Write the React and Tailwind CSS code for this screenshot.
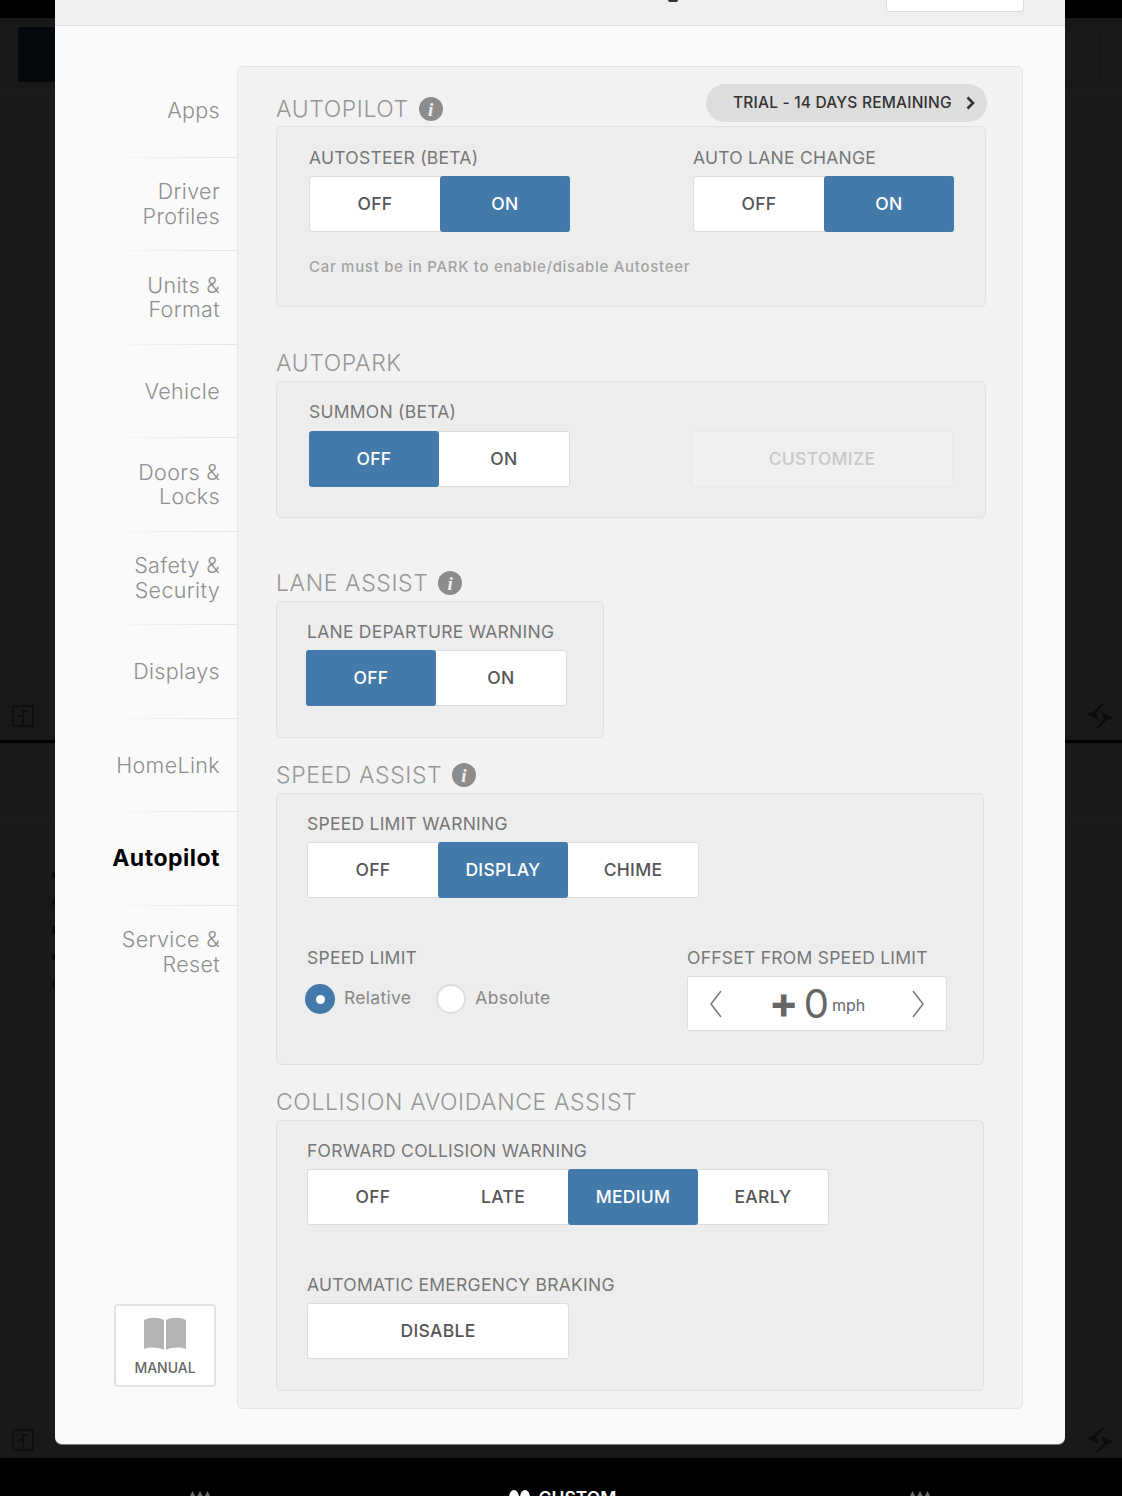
const navItems = [
  ["Apps"],
  ["Driver", "Profiles"],
  ["Units &", "Format"],
  ["Vehicle"],
  ["Doors &", "Locks"],
  ["Safety &", "Security"],
  ["Displays"],
  ["HomeLink"],
  ["Autopilot"],
  ["Service &", "Reset"],
];

function InfoIcon() {
  return (
    <span className="flex h-[24px] w-[24px] items-center justify-center rounded-full bg-[#8c8c8c] font-['Liberation_Serif',serif] text-[19px] font-bold italic leading-none text-[#f2f2f2]">
      i
    </span>
  );
}

function Segments({ options, active }) {
  return (
    <div className="flex h-[56px] w-fit rounded-[3px] border border-[#dcdcdc] bg-white">
      {options.map((o) => (
        <div
          key={o}
          className={
            o === active
              ? "-my-px flex w-[130px] items-center justify-center rounded-[3px] bg-[#447aaa] pt-px text-[17.5px] font-medium tracking-[0.3px] text-white first:-ml-px last:-mr-px"
              : "flex w-[130px] items-center justify-center pt-px text-[17.5px] font-medium tracking-[0.3px] text-[#555]"
          }
        >
          {o}
        </div>
      ))}
    </div>
  );
}

function Label({ children }) {
  return <div className="h-[20px] text-[17.5px] leading-[20px] tracking-[0.25px] whitespace-nowrap text-[#777]">{children}</div>;
}

function Heading({ children, info }) {
  return (
    <div className="flex h-[24px] items-center gap-[10px] text-[23px] font-light leading-[24px] tracking-[0.6px] whitespace-nowrap text-[#979797]">
      {children}
      {info && <InfoIcon />}
    </div>
  );
}

function Radio({ checked, label }) {
  return (
    <div className="flex items-center gap-[9px]">
      {checked ? (
        <span className="flex h-[30px] w-[30px] items-center justify-center rounded-full bg-[#447aaa]">
          <span className="h-[9px] w-[9px] rounded-full bg-white" />
        </span>
      ) : (
        <span className="h-[30px] w-[30px] rounded-full border-2 border-[#dedede] bg-white" />
      )}
      <span className="-mt-[2px] text-[17.5px] tracking-[0.3px] text-[#888]">{label}</span>
    </div>
  );
}

function BookIcon() {
  return (
    <svg width="44" height="34" viewBox="0 0 44 34" fill="#b3b3b3">
      <path d="M1 3 C7 0 15 0 21 3 V33 C15 30 7 30 1 32 Z" />
      <path d="M23 3 C29 0 37 0 43 3 V32 C37 30 29 30 23 33 Z" />
    </svg>
  );
}

function TripleArrow() {
  return (
    <svg width="22" height="10" viewBox="0 0 22 10" fill="#6e6e6e">
      <path d="M0 10 L3.5 3 L7 10 Z" />
      <path d="M7.5 10 L11 3 L14.5 10 Z" />
      <path d="M15 10 L18.5 3 L22 10 Z" />
    </svg>
  );
}

function CornerIcon() {
  return (
    <svg width="22" height="22" viewBox="0 0 22 22" fill="none" stroke="#0c0c0c" strokeWidth="1.5">
      <rect x="1" y="1" width="20" height="20" rx="1" />
      <path d="M6 11 H11 V21 M11 11 V6 H16" />
    </svg>
  );
}

function SyncIcon() {
  return (
    <svg width="24" height="28" viewBox="0 0 24 28" fill="none" stroke="#0c0c0c" strokeWidth="1.8">
      <path d="M15 2 L6 11 L9 17" />
      <path d="M9 26 L18 17 L15 11" />
      <path d="M1 12 L7 11 L9 16 Z" fill="#0c0c0c" />
      <path d="M23 16 L17 17 L15 12 Z" fill="#0c0c0c" />
    </svg>
  );
}

export default function App() {
  return (
    <div className="relative flex h-[1496px] w-[1122px] flex-col overflow-hidden bg-black font-['Inter',sans-serif]">
      {/* dimmed screen behind the dialog */}
      <div className="mt-[18px] flex h-[722px] flex-col justify-between bg-[#191919]">
        <div className="flex h-[75px] justify-between border-b border-[#1e1e1e] pt-[9px] pr-[22px] pl-[18px]">
          <div className="h-[55px] w-[50px] rounded-[3px] bg-[#05090e]" />
          <div className="h-[55px] w-[50px] rounded-[3px] border border-[#151515]" />
        </div>
        <div className="flex items-center justify-between pr-[10px] pb-[10px] pl-[12px]">
          <CornerIcon />
          <SyncIcon />
        </div>
      </div>
      <div className="relative mt-[3px] flex h-[715px] flex-col justify-between bg-[#191919]">
        <div className="mt-[76px] border-b border-[#1e1e1e]" />
        <div className="absolute top-[129px] left-[52px] flex h-[115px] w-[3px] flex-col justify-between">
          <span className="h-[6px] bg-[#0c0c0c]" />
          <span className="h-[6px] bg-[#0c0c0c]" />
          <span className="h-[8px] bg-[#0c0c0c]" />
          <span className="h-[6px] bg-[#0c0c0c]" />
          <span className="h-[6px] bg-[#0c0c0c]" />
        </div>
        <div className="flex items-center justify-between pr-[10px] pb-[4px] pl-[12px]">
          <CornerIcon />
          <SyncIcon />
        </div>
      </div>
      <div className="flex h-[38px] items-start justify-between pt-[30px] pr-[191px] pl-[189px]">
        <TripleArrow />
        <div className="ml-[4px] flex items-center gap-[8px]">
          <svg width="23" height="16" viewBox="0 0 23 16" fill="#ffffff">
            <ellipse cx="6" cy="8" rx="5" ry="8" />
            <ellipse cx="17" cy="8" rx="5" ry="8" />
          </svg>
          <span className="text-[17.5px] font-semibold leading-[20px] text-white">CUSTOM</span>
        </div>
        <TripleArrow />
      </div>

      {/* settings dialog */}
      <div className="absolute top-0 left-[55px] flex h-[1444px] w-[1010px] flex-col rounded-b-[7px] bg-[#fafafa] shadow-[0_1px_0_#777]">
        <div className="relative flex h-[26px] justify-end border-b border-[#dedede] bg-[#efefef] pr-[41px]">
          <div className="absolute top-0 left-[613px] h-[2px] w-[10px] rounded-b-full bg-[#333]" />
          <div className="h-[12px] w-[138px] rounded-b-[3px] border border-t-0 border-[#dcdcdc] bg-white" />
        </div>
        <div className="flex flex-1">
          {/* sidebar */}
          <div className="flex w-[182px] flex-col pt-[38px]">
            {navItems.map((lines, i) => (
              <div key={lines[0]} className="h-[93.5px]">
                <div className="flex h-[92.5px] flex-col items-end justify-center pr-[17px] text-[21.5px] leading-[24.5px]">
                  {lines.map((l) => (
                    <span
                      key={l}
                      className={
                        l === "Autopilot"
                          ? "text-[23px] font-bold tracking-[0.5px] text-black"
                          : "font-light tracking-[0.35px] text-[#8f8f8f]"
                      }
                    >
                      {l}
                    </span>
                  ))}
                </div>
                {i < navItems.length - 1 && <div className="ml-[45px] h-px bg-linear-to-r from-transparent to-[#e2e2e2]" />}
              </div>
            ))}
            <div className="mt-auto mb-[57px] ml-[59px] flex h-[83px] w-[102px] flex-col items-center rounded-[4px] border-2 border-[#e2e2e2] bg-white pt-[11px]">
              <BookIcon />
              <span className="mt-[6px] text-[14px] font-medium text-[#666]">MANUAL</span>
            </div>
          </div>

          {/* content panel */}
          <div className="mt-[40px] h-[1343px] w-[786px] rounded-[6px] border border-[#e4e4e4] bg-[#f2f2f2] pt-[17px] pl-[38px]">
            <div className="flex h-[42px] w-[711px] items-start justify-between">
              <div className="mt-[13px]">
                <Heading info>AUTOPILOT</Heading>
              </div>
              <div className="flex h-[38px] w-[281px] items-center justify-between rounded-full bg-[#dddddd] pr-[12px] pl-[27px] text-[15.5px] font-medium tracking-[0.2px] whitespace-nowrap text-[#333]">
                TRIAL - 14 DAYS REMAINING
                <svg width="9" height="14" viewBox="0 0 9 14" fill="none" stroke="#333" strokeWidth="2.6">
                  <path d="M1.5 1.5 L7 7 L1.5 12.5" />
                </svg>
              </div>
            </div>

            <div className="h-[181px] w-[710px] rounded-[5px] border border-[#e0e0e0] bg-[#ededed] pt-[21px] pl-[32px]">
              <div className="flex gap-[123px]">
                <div className="w-[261px]">
                  <Label>AUTOSTEER (BETA)</Label>
                  <div className="mt-[8px]">
                    <Segments options={["OFF", "ON"]} active="ON" />
                  </div>
                </div>
                <div>
                  <Label>AUTO LANE CHANGE</Label>
                  <div className="mt-[8px]">
                    <Segments options={["OFF", "ON"]} active="ON" />
                  </div>
                </div>
              </div>
              <div className="mt-[25px] text-[15px] leading-[20px] font-medium tracking-[0.7px] text-[#a3a3a3]">
                Car must be in PARK to enable/disable Autosteer
              </div>
            </div>

            <div className="mt-[44px] mb-[6px]">
              <Heading>AUTOPARK</Heading>
            </div>
            <div className="h-[137px] w-[710px] rounded-[5px] border border-[#e0e0e0] bg-[#ededed] pt-[20px] pl-[32px]">
              <Label>SUMMON (BETA)</Label>
              <div className="mt-[9px] flex gap-[121px]">
                <Segments options={["OFF", "ON"]} active="OFF" />
                <div className="flex h-[56px] w-[262px] items-center justify-center rounded-[3px] border border-[#e8e8e8] bg-[#f0f0f0] pt-px text-[17.5px] font-medium tracking-[0.3px] text-[#c9c9c9]">
                  CUSTOMIZE
                </div>
              </div>
            </div>

            <div className="mt-[53px] mb-[6px]">
              <Heading info>LANE ASSIST</Heading>
            </div>
            <div className="h-[137px] w-[328px] rounded-[5px] border border-[#e0e0e0] bg-[#ededed] pt-[20px] pl-[29px]">
              <div className="pl-px">
                <Label>LANE DEPARTURE WARNING</Label>
              </div>
              <div className="mt-[8px]">
                <Segments options={["OFF", "ON"]} active="OFF" />
              </div>
            </div>

            <div className="mt-[25px] mb-[6px]">
              <Heading info>SPEED ASSIST</Heading>
            </div>
            <div className="h-[272px] w-[708px] rounded-[5px] border border-[#e0e0e0] bg-[#ededed] pt-[20px] pl-[30px]">
              <Label>SPEED LIMIT WARNING</Label>
              <div className="mt-[8px]">
                <Segments options={["OFF", "DISPLAY", "CHIME"]} active="DISPLAY" />
              </div>
              <div className="mt-[50px] flex">
                <div className="w-[380px]">
                  <Label>SPEED LIMIT</Label>
                  <div className="mt-[16px] -ml-[2px] flex gap-[25px]">
                    <Radio checked label="Relative" />
                    <Radio label="Absolute" />
                  </div>
                </div>
                <div>
                  <Label>OFFSET FROM SPEED LIMIT</Label>
                  <div className="mt-[8px] flex h-[55px] w-[260px] items-center justify-between rounded-[3px] border border-[#dcdcdc] bg-white px-[21px] text-[#666]">
                    <svg width="14" height="28" viewBox="0 0 14 28" fill="none" stroke="#777" strokeWidth="1.5">
                      <path d="M12 1 L2 14 L12 27" />
                    </svg>
                    <div className="flex items-center">
                      <span className="-mt-[3px] text-[44px] leading-none font-bold">+</span>
                      <span className="ml-[5px] text-[40px] leading-none font-normal">0</span>
                      <span className="mt-[2px] ml-[3px] text-[16px] leading-none">mph</span>
                    </div>
                    <svg width="14" height="28" viewBox="0 0 14 28" fill="none" stroke="#777" strokeWidth="1.5">
                      <path d="M2 1 L12 14 L2 27" />
                    </svg>
                  </div>
                </div>
              </div>
            </div>

            <div className="mt-[25px] mb-[6px]">
              <Heading>COLLISION AVOIDANCE ASSIST</Heading>
            </div>
            <div className="h-[271px] w-[708px] rounded-[5px] border border-[#e0e0e0] bg-[#ededed] pt-[20px] pl-[30px]">
              <Label>FORWARD COLLISION WARNING</Label>
              <div className="mt-[8px]">
                <Segments options={["OFF", "LATE", "MEDIUM", "EARLY"]} active="MEDIUM" />
              </div>
              <div className="mt-[50px]">
                <Label>AUTOMATIC EMERGENCY BRAKING</Label>
              </div>
              <div className="mt-[8px] flex h-[56px] w-[262px] items-center justify-center rounded-[3px] border border-[#dcdcdc] bg-white pt-px text-[17.5px] font-medium tracking-[0.3px] text-[#555]">
                DISABLE
              </div>
            </div>
          </div>
        </div>
      </div>
    </div>
  );
}
